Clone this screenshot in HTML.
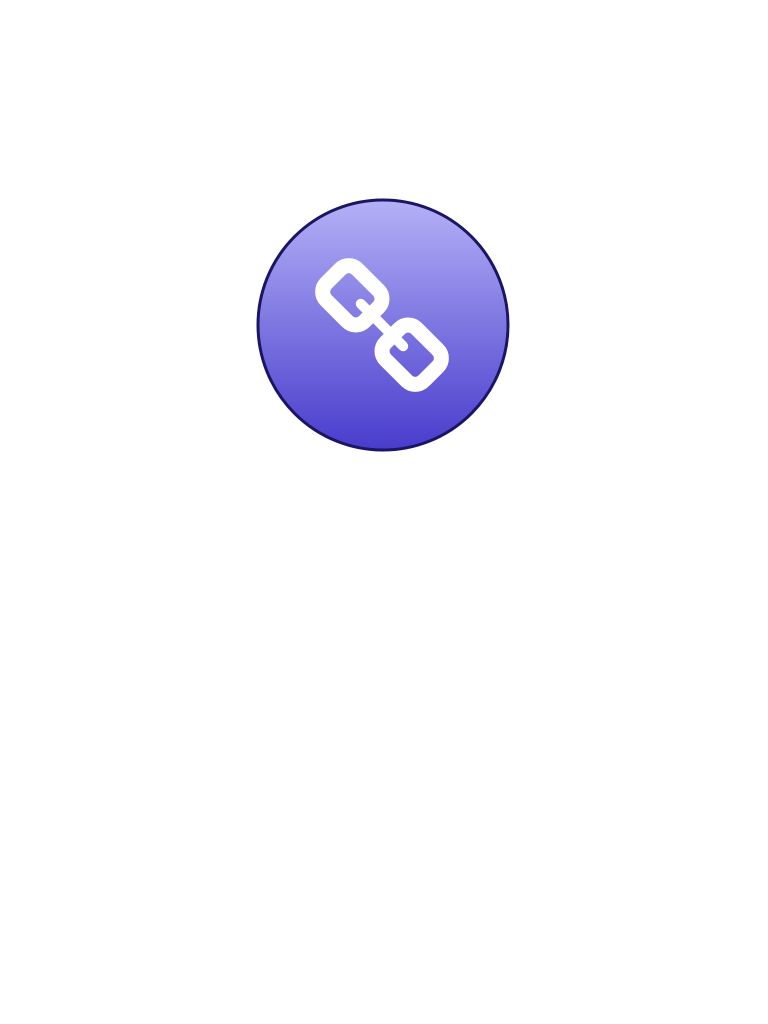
<!DOCTYPE html>
<html><head><style>html,body{margin:0;padding:0;background:#fff;width:768px;height:1024px;overflow:hidden}</style></head>
<body>
<svg width="768" height="1024" style="position:absolute;left:0;top:0">
<defs><linearGradient id="g" x1="0" y1="0" x2="0" y2="1"><stop offset="0" stop-color="#b4b1f6"/><stop offset="1" stop-color="#483ccc"/></linearGradient></defs>
<circle cx="383" cy="325" r="125" fill="url(#g)" stroke="#1b1565" stroke-width="3"/>
<g transform="translate(382,325) rotate(45)" fill="none" stroke="#fff">
<rect x="-69" y="-22" width="54" height="44" rx="12" stroke-width="15"/>
<rect x="15" y="-22" width="54" height="44" rx="12" stroke-width="15"/>
<line x1="-30" y1="0" x2="30" y2="0" stroke-width="10" stroke-linecap="round"/>
</g>
</svg>
</body></html>
